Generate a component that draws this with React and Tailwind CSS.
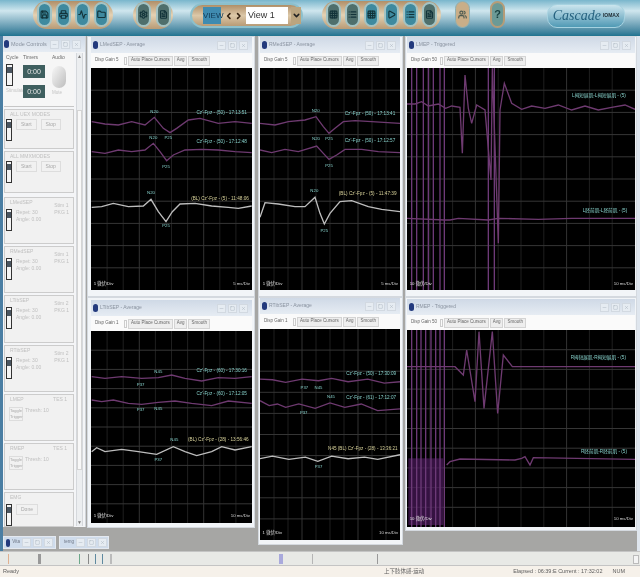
import { Folder, Save, Printer, Grid3x3, Settings, FileText, Play, List, Activity, ChevronLeft, ChevronRight, ChevronDown, Minus, Square, X, Users } from "lucide-react";

const PURPLE = "#6e3a70";
const WHITE = "#bdbdbd";
const TEAL = "#86d0ca";
const YELLOW = "#d8d29a";

const plots = {
  lmed: {
    origin: [85, 90],
    rect: [91, 68, 161, 222],
    traces: [
      { color: PURPLE, pts: "20,95 60,102 100,105 140,95 180,105 208,82 235,115 255,128 275,115 310,90 345,85 400,100 450,95 500,100" },
      { color: PURPLE, pts: "20,185 60,190 100,180 140,185 180,180 205,160 225,185 245,212 265,195 300,180 350,178 400,180 450,185 500,188" },
      { color: WHITE, pts: "20,352 50,350 85,340 130,350 175,348 198,328 220,365 243,395 262,365 285,342 330,340 380,348 430,352 460,355 500,348" },
    ],
    marks: [["N20", 208, 68], ["N20", 205, 146], ["P25", 250, 146], ["P25", 243, 235], ["N20", 198, 313], ["P25", 243, 411]],
    labels: [
      ["Cz'-Fpz - (50) - 17:13:51", 410, 71, TEAL],
      ["Cz'-Fpz - (50) - 17:12:48", 410, 158, TEAL],
      ["(BL) Cz'-Fpz - (5) - 11:48:06", 405, 329, YELLOW],
    ],
    scale: ["1 微伏/Div", 584, "5 ms/Div"],
  },
  rmed: {
    origin: [255, 90],
    rect: [260, 68, 140, 222],
    traces: [
      { color: PURPLE, pts: "15,100 60,105 100,95 150,90 183,80 205,110 222,130 240,115 265,95 300,92 350,95 435,100" },
      { color: PURPLE, pts: "15,180 50,188 90,178 130,185 185,168 205,190 222,208 245,195 270,178 320,178 370,185 435,188" },
      { color: WHITE, pts: "15,382 30,338 70,342 120,350 150,350 180,322 195,370 208,402 225,370 255,335 290,332 340,350 380,358 435,365" },
    ],
    marks: [["N20", 182, 66], ["N20", 183, 151], ["P25", 222, 151], ["P25", 222, 230], ["N20", 178, 306], ["P25", 208, 426]],
    labels: [
      ["Cz'-Fpz - (50) - 17:13:41", 345, 74, TEAL],
      ["Cz'-Fpz - (50) - 17:12:57", 345, 156, TEAL],
      ["(BL) Cz'-Fpz - (5) - 11:47:39", 338, 314, YELLOW],
    ],
    scale: ["1 微伏/Div", 584, "5 ms/Div"],
  },
  lmep: {
    origin: [405, 30],
    rect: [407, 68, 228, 222],
    spikes: [20, 35, 55, 70, 85, 105, 118, 250, 268],
    traces: [
      { color: PURPLE, pts: "5,222 30,222 50,215 70,228 100,222 122,235 140,228 165,232 172,370 180,135 190,235 200,280 215,225 240,240 258,450 262,115 280,640 285,240 298,160 320,220 350,238 380,228 420,235 460,225 500,240 540,228 580,240 620,232 660,225 690,238" },
      { color: PURPLE, pts: "5,565 120,570 135,570 160,565 250,570 280,565 400,568 500,565 690,565" },
    ],
    marks: [],
    labels: [
      ["L拇短展肌-L拇短展肌 - (5)", 582, 201, TEAL],
      ["L胫前肌-L胫前肌 - (5)", 600, 547, TEAL],
    ],
    scale: ["10 微伏/Div", 764, "10 ms/Div"],
  },
  ltib: {
    origin: [85, 295],
    rect: [91, 331, 161, 192],
    traces: [
      { color: PURPLE, pts: "20,245 60,250 110,245 170,250 220,248 260,240 300,250 350,258 400,248 450,250 500,245" },
      { color: PURPLE, pts: "20,315 50,320 85,315 130,325 170,328 220,322 270,318 320,325 380,332 430,318 500,325" },
      { color: WHITE, pts: "20,470 35,458 60,470 110,463 160,470 215,478 265,455 300,470 335,482 380,470 410,455 450,465 500,455" },
    ],
    marks: [["P37", 167, 272], ["N45", 220, 234], ["P37", 167, 349], ["N45", 220, 346], ["N45", 268, 439], ["P37", 220, 499]],
    labels: [
      ["Cz'-Fpz - (60) - 17:30:16", 410, 230, TEAL],
      ["Cz'-Fpz - (60) - 17:12:05", 410, 300, TEAL],
      ["(BL) Cz'-Fpz - (28) - 13:56:46", 400, 437, YELLOW],
    ],
    scale: ["1 微伏/Div", 666, "10 ms/Div"],
  },
  rtib: {
    origin: [255, 295],
    rect: [259, 328, 142, 212],
    traces: [
      { color: PURPLE, pts: "12,250 50,252 90,260 140,250 190,255 230,248 280,258 340,250 390,262 438,258" },
      { color: PURPLE, pts: "12,315 40,330 65,325 90,335 130,325 180,338 225,322 270,335 320,325 370,345 438,340" },
      { color: WHITE, pts: "12,490 50,482 100,492 150,485 188,498 230,482 280,490 330,485 370,492 438,478" },
    ],
    marks: [["P37", 147, 279], ["N45", 190, 281], ["N45", 228, 306], ["P37", 145, 356], ["P37", 190, 519]],
    labels: [
      ["Cz'-Fpz - (50) - 17:30:09", 350, 237, TEAL],
      ["Cz'-Fpz - (61) - 17:12:07", 350, 309, TEAL],
      ["N45 (BL) Cz'-Fpz - (28) - 13:36:21", 325, 464, YELLOW],
    ],
    scale: ["1 微伏/Div", 716, "10 ms/Div"],
  },
  rmep: {
    origin: [405, 325],
    rect: [407, 330, 228, 197],
    spikes: [20, 35, 48, 62, 78, 92, 105, 118],
    haze: true,
    traces: [
      { color: PURPLE, pts: "5,125 125,125 150,125 175,150 185,75 210,230 222,20 237,250 262,20 278,265 295,90 322,125 690,125" },
      { color: PURPLE, pts: "125,420 135,410 165,402 330,405 350,400 360,395 375,420 385,398 690,403" },
    ],
    marks: [],
    labels: [
      ["R拇短展肌-R拇短展肌 - (5)", 580, 103, TEAL],
      ["R胫前肌-R胫前肌 - (5)", 597, 383, TEAL],
    ],
    scale: ["10 微伏/Div", 586, "10 ms/Div"],
  },
};

const Plot = ({ name }) => {
  const p = plots[name];
  const [ox, oy] = p.origin;
  const [x, y, w, h] = p.rect;
  const left = (x - ox) * 3;
  const top = (y - oy) * 3;
  const width = w * 3;
  const height = h * 3;
  const steps = [1, 2, 3, 4, 5, 6, 7, 8, 9];
  const [sl, sy, sr] = p.scale;

  return (
    <svg
      viewBox={`${left} ${top} ${width} ${height}`}
      preserveAspectRatio="none"
      className="block w-full h-full bg-black"
    >
      {steps.map((i) => (
        <line key={"v" + i} x1={left + (width * i) / 10} x2={left + (width * i) / 10} y1={top} y2={top + height} stroke={i === 3 || i === 7 ? "#333333" : "#1f1f1f"} strokeWidth="3" />
      ))}
      {steps.map((i) => (
        <line key={"h" + i} x1={left} x2={left + width} y1={top + (height * i) / 10} y2={top + (height * i) / 10} stroke="#363636" strokeWidth="3" />
      ))}
      {p.haze && <rect x="10" y="400" width="105" height="200" fill="#4c1a5c" opacity="0.7" />}
      {p.spikes &&
        p.spikes.map((s) => (
          <line key={s} x1={s} x2={s} y1={top} y2={top + height} stroke="#6d3a78" strokeWidth="4" />
        ))}
      {p.traces.map((t, i) => (
        <polyline key={i} points={t.pts} fill="none" stroke={t.color} strokeWidth="4" />
      ))}
      {p.marks.map(([text, mx, my], i) => (
        <text key={i} x={mx} y={my} fontSize="13" textAnchor="middle" fill={TEAL}>
          {text}
        </text>
      ))}
      {p.labels.map(([text, lx, ly, color], i) => (
        <text key={i} x={lx} y={ly} fontSize="14" textAnchor="middle" fill={color}>
          {text}
        </text>
      ))}
      <text x={left + 8} y={sy} fontSize="13" fill="#e0e0e0">{sl}</text>
      <text x={left + width - 6} y={sy} fontSize="13" textAnchor="end" fill="#d8d8d8">{sr}</text>
    </svg>
  );
};

const WinButtons = () => (
  <div className="ml-auto flex gap-[2px] text-[#a4aebb]">
    {[Minus, Square, X].map((Icon, i) => (
      <span key={i} className="w-[9px] h-[9px] flex items-center justify-center border border-[#d2d9e1] bg-[#e6ecf2]">
        <Icon size={5} strokeWidth={2} />
      </span>
    ))}
  </div>
);

const SigWindow = ({ title, name, gain, className }) => (
  <div className={`flex flex-col min-h-0 bg-[#f2f5f8] border border-[#d4d9df] ${className}`}>
    <div className="h-4 shrink-0 flex items-center pl-[2px] pr-1 gap-[2px] bg-gradient-to-b from-[#cfd9e6] to-[#e6ecf3]">
      <span className="w-[5px] h-[8px] rounded-full bg-[#233a7d]" />
      <span className="text-[5px] text-[#8a93a0]">{title}</span>
      <WinButtons />
    </div>
    <div className="h-[15px] shrink-0 flex items-center gap-[1px] px-[2px] bg-[#fafafa] text-[4.5px] text-[#666666]">
      <span className="w-[30px] pl-[2px]">Disp Gain {gain}</span>
      <span className="w-[3px] h-[8px] border border-[#cccccc]" />
      {["Auto Place Cursors", "Avg", "Smooth"].map((b) => (
        <span key={b} className="h-[10px] px-[2px] flex items-center border border-[#d4d4d4] bg-[#eeeeee]">{b}</span>
      ))}
    </div>
    <div className="flex-1 min-h-0">
      <Plot name={name} />
    </div>
  </div>
);

const Lever = () => (
  <div className="w-[6px] h-[22px] border border-[#333333] bg-[#f5f5f5] shrink-0">
    <div className="w-full h-[6px] mt-[2px] bg-[#4a5560]" />
  </div>
);

const StimSection = ({ name, right, className }) => (
  <div className={`border border-[#cccccc] bg-[#f1f1f1] pl-[1px] pt-[1px] text-[5px] text-[#c0c0c0] ${className}`}>
    <div className="pl-1">{name}</div>
    <div className="flex gap-1 mt-[2px]">
      <Lever />
      <div className="leading-[7px]">
        <div>Repet: 30</div>
        <div>Angle: 0.00</div>
      </div>
      <div className="ml-auto pr-[4px] -mt-[7px] leading-[7px]">
        <div>{right}</div>
        <div>PKG 1</div>
      </div>
    </div>
  </div>
);

const ModeSection = ({ name, className }) => (
  <div className={`border border-[#cccccc] bg-[#f1f1f1] pl-[1px] pt-[1px] text-[5px] text-[#c0c0c0] ${className}`}>
    <div className="pl-1">{name}</div>
    <div className="flex items-start gap-1">
      <Lever />
      <span className="px-1 py-[1px] border border-[#dddddd] text-[#a8a8a8]">Start</span>
      <span className="px-1 py-[1px] border border-[#dddddd] text-[#a8a8a8]">Stop</span>
    </div>
  </div>
);

const TrigSection = ({ name, className }) => (
  <div className={`border border-[#cccccc] bg-[#f1f1f1] pl-[1px] pt-[1px] text-[5px] text-[#c0c0c0] ${className}`}>
    <div className="flex justify-between pl-1 pr-[6px]">
      <span>{name}</span>
      <span>TES 1</span>
    </div>
    <div className="flex items-start gap-[2px] pl-[3px] mt-[3px] leading-[6px]">
      <div className="w-[14px] border border-[#dddddd] text-[#a8a8a8] text-[4px] leading-[6px] text-center">
        <div>Toggle</div>
        <div>Trigger</div>
      </div>
      <span>Thresh: 10</span>
    </div>
  </div>
);

const LeftPanel = () => (
  <div className="w-[83px] h-[491px] shrink-0 flex flex-col bg-[#f4f5f7] border-r border-[#cfd3d8]">
    <div className="h-4 shrink-0 flex items-center pl-[1px] pr-1 gap-[2px] bg-gradient-to-b from-[#cfd9e6] to-[#e6ecf3]">
      <span className="w-[5px] h-[8px] rounded-full bg-[#233a7d]" />
      <span className="text-[5.5px] text-[#8a93a0]">Mode Controls</span>
      <WinButtons />
    </div>
    <div className="flex-1 min-h-0 flex">
      <div className="w-[72px] pl-[1px] flex flex-col gap-[2px]">
        <div className="h-[55px] shrink-0 flex gap-[3px] pl-[2px] pt-[2px] bg-[#f6f6f6] border-b border-[#c6c6c6] text-[5px] text-[#6c6c6c]">
          <div className="w-[10px]">
            <div>Cycle</div>
            <div className="mt-[2px] w-[7px] h-[22px] border border-[#333333] bg-[#f5f5f5]">
              <div className="w-full h-[6px] mt-[2px] bg-[#4a5560]" />
            </div>
            <div className="mt-[2px] text-[4.5px] text-[#c4c4c4]">Stimulate</div>
          </div>
          <div className="w-[24px] ml-[4px]">
            <div>Timers</div>
            <div className="mt-[3px] h-[13px] w-[22px] bg-[#3f5f5f] text-[#e8e8e8] text-[7px] leading-[13px] text-center">0:00</div>
            <div className="mt-[7px] h-[13px] w-[22px] bg-[#3f5f5f] text-[#e8e8e8] text-[7px] leading-[13px] text-center">0:00</div>
          </div>
          <div className="flex-1 ml-[2px]">
            <div>Audio</div>
            <div className="mt-[4px] w-[14px] h-[22px] rounded-full bg-gradient-to-br from-[#f8f8f8] to-[#bdbdbd]" />
            <div className="mt-[2px] text-[4.5px] text-[#c4c4c4]">Mute</div>
          </div>
        </div>
        <ModeSection name="ALL UEX MODES" className="h-[40px] shrink-0" />
        <ModeSection name="ALL MMXMODES" className="h-[42px] shrink-0" />
        <StimSection name="LMedSEP" right="Stim 1" className="h-[47px] shrink-0 mt-[2px]" />
        <StimSection name="RMedSEP" right="Stim 1" className="h-[47px] shrink-0" />
        <StimSection name="LTibSEP" right="Stim 2" className="h-[48px] shrink-0" />
        <StimSection name="RTibSEP" right="Stim 2" className="h-[47px] shrink-0" />
        <TrigSection name="LMEP" className="h-[47px] shrink-0" />
        <TrigSection name="RMEP" className="h-[47px] shrink-0" />
        <div className="flex-1 min-h-0 border border-[#cccccc] bg-[#f1f1f1] pl-[1px] pt-[1px] text-[5px] text-[#c0c0c0]">
          <div className="pl-1">EMG</div>
          <div className="flex items-start gap-1 mt-[2px]">
            <Lever />
            <span className="px-1 py-[1px] border border-[#dddddd] text-[#a8a8a8]">Done</span>
          </div>
        </div>
      </div>
      <div className="flex-1 mx-[2px] my-[1px] flex flex-col items-center justify-between border-x border-[#d5d8dc] bg-[#eceef0] text-[#777777] text-[5px]">
        <span>▲</span>
        <span className="w-[5px] h-[360px] bg-[#f8f8f8] border border-[#d4d4d4]" />
        <span>▼</span>
      </div>
    </div>
  </div>
);

const Oval = ({ icon: Icon, dark }) => (
  <span className={`w-[15px] h-[25px] rounded-full flex items-center justify-center border-2 border-[#a3c3c4] ${dark ? "bg-[#4f6f6c]" : "bg-[#3f8a9f]"}`}>
    <Icon size={9} strokeWidth={3} className="text-[#12333a]" />
  </span>
);

const Pill = ({ className, children }) => (
  <div className={`h-[28px] -mt-[2px] flex items-center justify-around rounded-full bg-gradient-to-b from-[#b08f68] via-[#e4d2b4] to-[#b89b76] ${className}`}>
    {children}
  </div>
);

const Toolbar = () => (
  <div className="h-9 shrink-0 flex items-center pl-[33px] pb-[5px] bg-gradient-to-b from-[#79b6cc] via-[#cfe6ee] via-30% to-[#1e7390]">
    <Pill className="w-20 px-[2px]">
      <Oval icon={Save} />
      <Oval icon={Printer} />
      <Oval icon={Activity} />
      <Oval icon={Folder} />
    </Pill>
    <Pill className="w-10 ml-5">
      <Oval icon={Settings} dark />
      <Oval icon={FileText} dark />
    </Pill>
    <div className="ml-[17px] w-[113px] h-[25px] flex items-center gap-[3px] pl-[11px] rounded-full border-2 border-[#8cc0cc] bg-gradient-to-b from-[#b08f68] via-[#dcc8a8] to-[#b89b76]">
      <span className="w-[18px] h-[17px] bg-[#3f8bb0] text-[#123a55] text-[8px] leading-[17px] text-center">VIEW</span>
      <span className="flex w-[19px] text-[#332211]">
        <ChevronLeft size={10} strokeWidth={4} />
        <ChevronRight size={10} strokeWidth={4} />
      </span>
      <span className="w-[43px] h-[17px] bg-white text-[#333333] text-[9px] leading-[17px] pl-[2px]">View 1</span>
      <span className="w-[10px] h-[17px] bg-[#bba57f] flex items-center justify-center text-[#222222]">
        <ChevronDown size={9} strokeWidth={4} />
      </span>
    </div>
    <Pill className="w-[119px] ml-[19px] px-[2px]">
      <Oval icon={Grid3x3} dark />
      <Oval icon={List} dark />
      <Oval icon={Grid3x3} />
      <Oval icon={Play} />
      <Oval icon={List} />
      <Oval icon={FileText} dark />
    </Pill>
    <div className="ml-[14px] -mt-[2px] flex items-center justify-center w-[15px] h-[27px] rounded-full bg-[#c9ae88] border border-[#8fb0b2]">
      <Users size={9} strokeWidth={3} className="text-[#4d5a50]" />
    </div>
    <div className="ml-5 -mt-[2px] flex items-center justify-center w-[15px] h-[27px] rounded-full bg-[#6b9a96] border-2 border-[#b59c78] text-[#173f3f] text-[11px] font-bold">?</div>
    <div className="ml-[42px] w-[78px] h-[24px] flex items-center justify-center gap-[2px] rounded-[10px] border border-[#a6d2e0] bg-gradient-to-b from-[#cbe5ee] to-[#4f9ab5]">
      <span className="font-['Liberation_Serif',serif] italic text-[#24607e] text-[14px]">Cascade</span>
      <span className="text-[5px] font-bold text-[#222e35]">IOMAX</span>
    </div>
  </div>
);

const MiniTab = ({ label, className }) => (
  <div className={`h-[13px] flex items-center gap-[2px] px-[2px] bg-[#cfdcec] border border-[#e4e9f0] text-[4.5px] text-[#6d7685] ${className}`}>
    <span className="w-[5px] h-[8px] rounded-full bg-[#233a7d]" />
    <span>{label}</span>
    <WinButtons />
  </div>
);

const ticks = [
  { x: "left-[8px]", c: "bg-[#e0b090]", w: "w-[1px]" },
  { x: "left-[38px]", c: "bg-[#999999]", w: "w-[3px]" },
  { x: "left-[79px]", c: "bg-[#6da88a]", w: "w-[1px]" },
  { x: "left-[88px]", c: "bg-[#888888]", w: "w-[1px]" },
  { x: "left-[95px]", c: "bg-[#5f8aa0]", w: "w-[1px]" },
  { x: "left-[102px]", c: "bg-[#5f8aa0]", w: "w-[1px]" },
  { x: "left-[110px]", c: "bg-[#bbbbbb]", w: "w-[2px]" },
  { x: "left-[279px]", c: "bg-[#a9a9dc]", w: "w-[4px]" },
  { x: "left-[312px]", c: "bg-[#b5b5b5]", w: "w-[1px]" },
  { x: "left-[377px]", c: "bg-[#999999]", w: "w-[1px]" },
];

const App = () => (
  <div className="w-[640px] h-[577px] overflow-hidden flex flex-col blur-[0.7px] bg-[#a6a6a4] font-['Liberation_Sans','Noto_Sans_CJK_SC',sans-serif]">
    <Toolbar />
    <div className="relative flex-1 min-h-0 flex bg-[#a6a6a4]">
      <div className="w-[3px] shrink-0 bg-[#4a7ea3]" />
      <LeftPanel />
      <div className="w-[168px] ml-[1px] shrink-0 flex flex-col">
        <SigWindow title="LMedSEP - Average" name="lmed" gain="5" className="h-[261px] pl-[3px] pr-[2px] pb-[6px]" />
        <SigWindow title="LTibSEP - Average" name="ltib" gain="1" className="h-[231px] pl-[3px] pr-[2px] pb-[4px] pt-[2px]" />
      </div>
      <div className="w-[145px] ml-[3px] shrink-0 flex flex-col">
        <SigWindow title="RMedSEP - Average" name="rmed" gain="5" className="h-[261px] pl-[1px] pr-[2px] pb-[6px]" />
        <SigWindow title="RTibSEP - Average" name="rtib" gain="1" className="h-[248px] pl-[1px] pr-[2px] pb-[4px]" />
      </div>
      <div className="w-[232px] ml-[2px] shrink-0 flex flex-col">
        <SigWindow title="LMEP - Triggered" name="lmep" gain="50" className="h-[261px] px-[1px] pb-[6px]" />
        <SigWindow title="RMEP - Triggered" name="rmep" gain="50" className="h-[234px] px-[1px] pb-[3px] pt-[1px]" />
      </div>
      <div className="flex-1 bg-[#dfe6ee]" />
      <div className="absolute left-[3px] bottom-[2px] flex gap-[3px]">
        <MiniTab label="Vita" className="w-[53px]" />
        <MiniTab label="temg" className="w-[50px]" />
      </div>
    </div>
    <div className="relative h-[15px] shrink-0 bg-[#e8e9e6] border-y border-[#c4c4c4]">
      {ticks.map((t) => (
        <span key={t.x} className={`absolute top-[2px] h-[10px] ${t.x} ${t.c} ${t.w}`} />
      ))}
      <span className="absolute right-[1px] top-[3px] h-[9px] w-[6px] border border-[#bbbbbb] bg-[#f4f4f4]" />
    </div>
    <div className="h-[11px] shrink-0 flex items-center pl-[3px] pr-[15px] bg-[#f6f1ea] text-[5.5px] text-[#5c5c5c]">
      <span>Ready</span>
      <span className="ml-[365px]">上下肢体感-运动</span>
      <span className="ml-auto">Elapsed : 06:39:E Current : 17:32:02</span>
      <span className="ml-[10px]">NUM</span>
    </div>
  </div>
);

export default App;
